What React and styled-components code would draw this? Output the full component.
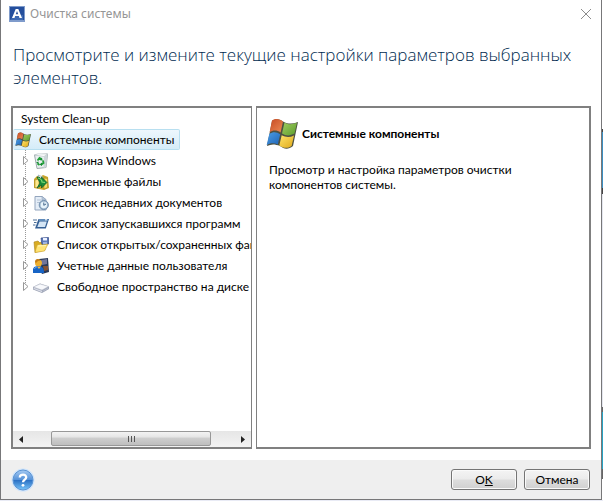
import React from 'react';
import styled, { createGlobalStyle } from 'styled-components';

const GlobalStyle = createGlobalStyle`
  * {
    box-sizing: border-box;
  }
  body {
    margin: 0;
    background: #e9ebf5;
    font-family: Lato, Roboto, sans-serif;
    font-size: 12px;
    color: #000;
  }
  button {
    font-family: inherit;
    font-size: inherit;
    color: inherit;
  }
  svg {
    flex-shrink: 0;
  }
`;

const Screen = styled.div`
  display: flex;
  height: 100vh;
  padding-bottom: 1px;
`;
const Dialog = styled.main`
  flex: 1;
  min-width: 0;
  display: flex;
  flex-direction: column;
  background: #fff;
  border: 1px solid #777779;
  border-top: 0;
`;
const Behind = styled.div`
  width: 1px;
  background: linear-gradient(
    #fff 129px, #444 129px, #444 132px, #3b8fc2 132px, #3b8fc2 188px,
    #444 188px, #444 194px, #e4e6ee 194px, #e4e6ee 407px, #666 407px,
    #666 412px, #27a3c4 412px, #27a3c4 469px, #666 469px, #666 479px, #fff 479px
  );
`;
const TitleBar = styled.header`
  display: flex;
  align-items: center;
  height: 27px;
  padding: 0 9px 0 8px;
  font-family: "Noto Sans", sans-serif;
  font-size: 12px;
  color: #969696;
`;
const Title = styled.span`
  flex: 1;
  margin-left: 5px;
`;
const PlainButton = styled.button`
  display: flex;
  align-items: center;
  justify-content: center;
  padding: 0;
  border: 0;
  background: none;
`;
const Heading = styled.h1`
  margin: 0;
  padding: 16px 12px 17px;
  font-family: "Open Sans", "Noto Sans", sans-serif;
  font-size: 17px;
  font-weight: 300;
  line-height: 23px;
  color: #002b50;
`;
const Panels = styled.div`
  flex: 1;
  min-height: 0;
  display: grid;
  grid-template-columns: 241px 1fr;
  gap: 4px;
  padding: 0 10px;
`;
const Panel = styled.section`
  display: flex;
  flex-direction: column;
  min-width: 0;
  border: 2px solid #808080;
  border-width: ${props => props.side === 'left' ? '2px 1px 2px 2px' : '2px 2px 2px 1px'};
`;
const TreeWrap = styled.div`
  flex: 1;
  overflow: hidden;
  white-space: nowrap;
`;
const TreeTitle = styled.div`
  padding-left: 8px;
  line-height: 21px;
`;
const Tree = styled.ul`
  margin: 0;
  padding: 0;
  list-style: none;
`;
const Selected = styled.div`
  display: inline-flex;
  align-items: center;
  gap: 8px;
  height: 21px;
  padding: 0 5px 0 1px;
  border: 1px solid #b8dff0;
  border-left-color: #dceffa;
  border-radius: 2px;
  background: linear-gradient(#edf7fd, #d5ecf8);
  vertical-align: top;
`;
const Branch = styled(Tree)`
  margin-left: 10px;
  background: repeating-linear-gradient(#999 0 1px, transparent 1px 2px) 2px 0 / 1px 136px no-repeat;
`;
const Row = styled.li`
  display: flex;
  align-items: center;
  height: 21px;
  gap: 8px;
`;
const Expander = styled(PlainButton)`
  flex-shrink: 0;
  width: 6px;
  height: 11px;
  margin-right: -4px;
`;
const ScrollBar = styled.div`
  display: flex;
  height: 16px;
  background: linear-gradient(#e6e6e6, #f3f3f3);
`;
const ScrollButton = styled(PlainButton)`
  width: 16px;
`;
const Track = styled.div`
  flex: 1;
  display: flex;
  padding: 0 24px 0 22px;
`;
const Thumb = styled.div`
  flex: 1;
  display: flex;
  align-items: center;
  justify-content: center;
  gap: 2px;
  height: 15px;
  border: 1px solid #989898;
  border-radius: 2px;
  background: linear-gradient(#f3f3f3 0, #e5e5e5 40%, #cfcfcf 45%, #bebebe 100%);
`;
const Grip = styled.span`
  width: 1px;
  height: 6px;
  background: #555;
`;
const Details = styled.div`
  padding: 10px 12px;
`;
const DetailsHead = styled.div`
  display: flex;
  align-items: center;
  gap: 4px;
  margin-left: -3px;
`;
const DetailsTitle = styled.h2`
  margin: 0;
  font-size: 12px;
  line-height: 16px;
`;
const DetailsText = styled.p`
  max-width: 270px;
  margin: 12px 0 0;
  line-height: 15px;
`;
const Footer = styled.footer`
  display: flex;
  align-items: center;
  gap: 7px;
  height: 39px;
  margin-top: 11px;
  padding: 0 11px 0 10px;
  background: #efefef;
`;
const HelpButton = styled(PlainButton)`
  margin-right: auto;
`;
const Button = styled.button`
  width: 66px;
  height: 21px;
  padding: 0;
  border: 1px solid #747474;
  border-radius: 3px;
  background: linear-gradient(#f4f4f4 0, #ebebeb 48%, #dddddd 52%, #d0d0d0 100%);
  box-shadow: inset 0 0 0 1px #fafafa;
  line-height: 17px;
`;

const AppIcon = () => (
  <svg width="16" height="16" viewBox="0 0 16 16" aria-hidden="true">
    <rect width="16" height="16" fill="#7f9bcb" />
    <rect x="1" y="1" width="14" height="13" fill="#254f9d" />
    <path d="M1 14L5 9L14 9V14Z" fill="#3d69b2" />
    <path d="M3 12L6.700 3H9.300L13 12H10.500L9.900 10H6.100L5.500 12ZM6.800 8.200H9.200L8 5Z" fill="#fff" fillRule="evenodd" />
  </svg>
);

const WindowsIcon = ({ size }) => (
  <svg width={size} height={size} viewBox="0 0 32 32" aria-hidden="true">
    <defs>
      <linearGradient id="wr" x2="1" y2="1"><stop stopColor="#c64b23" /><stop offset="1" stopColor="#ee8a54" /></linearGradient>
      <linearGradient id="wg" x2="1" y2="1"><stop stopColor="#a0cc61" /><stop offset="1" stopColor="#5c9d2b" /></linearGradient>
      <linearGradient id="wb" x2="1" y2="1"><stop stopColor="#4b9ce4" /><stop offset="1" stopColor="#1f65b7" /></linearGradient>
      <linearGradient id="wy" x2="1" y2="1"><stop stopColor="#ffe46a" /><stop offset="1" stopColor="#dfa91a" /></linearGradient>
    </defs>
    <path d="M6 3C10 0 14 1 18 4C22 6 27 6 32 4L27 28C22 32 18 31 14 28C9 26 5 26 1 28Z" fill="#4d5142" />
    <path d="M6 2.500C10 0 14 1 17 3.500L14.600 14.500C11 12 7 12 3.600 14.200Z" fill="url(#wr)" />
    <path d="M18.500 4.400C22 7 27 6.500 31 4.500L28.500 15.600C24 18 20 18 16 15.500Z" fill="url(#wg)" />
    <path d="M3.300 16C7 13.500 11 14 14.200 16.300L11.800 26.500C8 24.500 4 25 .7 27Z" fill="url(#wb)" />
    <path d="M15.700 17.300C20 19.500 24 19.500 28 17.400L25.600 28C21.500 31 17 30 13.300 27.500Z" fill="url(#wy)" />
  </svg>
);

const RecycleIcon = () => (
  <>
    <path d="M1.500 2L14.500 1L13 14.500L4 15.500Z" fill="#e9eff0" stroke="#9da9ac" />
    <path d="M1.500 2L5 .8L14.500 1L11 3.500Z" fill="#fff" stroke="#bcc6c8" strokeWidth=".7" />
    <path d="M11 3.500L10.500 15L13 14.500L14.500 1Z" fill="#ccd5d8" />
    <path d="M4.500 7.500L6.500 5L9 6.500M10 7.500L10.500 10L8 11.800M6.500 12L4.500 10.500" fill="none" stroke="#22a13a" strokeWidth="1.800" />
    <path d="M8 4.500L10 7.500L7 7.300ZM9 9.500V13L6.500 11.500ZM3 9.500L5.500 8.500V11Z" fill="#168b32" />
  </>
);

const TempIcon = () => (
  <>
    <path d="M1 5L4 2L7 3L10 1L15 3L16 14L11 16L1 14Z" fill="#c9a62b" />
    <path d="M2 6L6 5V14L2 13.500Z" fill="#ffe98d" stroke="#9f7f1e" strokeWidth=".5" />
    <path d="M11 4L14.500 4.500V13.500L11 15Z" fill="#f7db67" stroke="#9f7f1e" strokeWidth=".5" />
    <path d="M5 1L10 3L8 6Z" fill="#f7fbff" stroke="#64869d" strokeWidth=".5" />
    <path d="M4 3C7 3 8 4 8 6L8.500 3L14 8.500L8.500 14V11L4 14L7 9Z" fill="#188d3a" stroke="#075a25" strokeWidth=".7" />
    <path d="M5 4Q9 5 9 8L12 8.500" fill="none" stroke="#83dc73" strokeWidth="1.200" />
  </>
);

const RecentIcon = () => (
  <>
    <path d="M2 1.500H9L13 4.500V15H2Z" fill="#e4edf7" stroke="#93a5bd" />
    <path d="M9 1.500V5H13Z" fill="#bdcee0" stroke="#93a5bd" strokeWidth=".6" />
    <path d="M4 5H8M4 7.500H7" stroke="#b4c3d5" />
    <circle cx="10.800" cy="10" r="4.600" fill="#9eb6cd" stroke="#7391b0" />
    <circle cx="10.800" cy="10" r="3.200" fill="#e6f3fb" />
    <path d="M10.800 7.500V10.300L13 9" fill="none" stroke="#47698c" />
  </>
);

const ProgramsIcon = () => (
  <>
    <path d="M5.500 3H16L12.800 12.500H2Z" fill="#345f94" />
    <path d="M6.500 5.500H13.800L12 11H4.300Z" fill="#d4e5f5" />
    <path d="M6 4H15" stroke="#8cb9e0" />
    <path d="M0 4H4M1 6.500H3.500M0 9H2.500" stroke="#496c96" />
    <path d="M12 3.800H14" stroke="#fff" />
  </>
);

const OpenedIcon = () => (
  <>
    <path d="M1 5L5 4L6.500 5.500L12 5V13L2 15.500Z" fill="#d9ac20" stroke="#aa8119" strokeWidth=".6" />
    <path d="M8 1L15.500 .5V7L9 8Z" fill="#5877b8" stroke="#354b87" strokeWidth=".7" />
    <path d="M10 1H14V3.500H10Z" fill="#eef2ff" />
    <path d="M10 5L14 4.800V7L10 7.500Z" fill="#a0b4df" />
    <path d="M4 8L8 7L9 8L15 7L11.500 14L2 15.500Z" fill="#ffe475" stroke="#cba12a" strokeWidth=".6" />
    <path d="M5 9L13 8.500" stroke="#fff8bd" />
  </>
);

const UserIcon = () => (
  <>
    <path d="M6 1L15 0L16 14L9 16L6 10Z" fill="#293957" />
    <path d="M8 2L14 1V6L9 7Z" fill="#70759a" />
    <path d="M10 8H15V12L11 13Z" fill="#845233" />
    <circle cx="5.500" cy="5" r="3.500" fill="#efb02f" />
    <path d="M2 4C2 1 5 0 7.500 2.500L5 3L3 5Z" fill="#c47c17" />
    <path d="M0 15V11C1 8 4 8 6 8C9 8 11 10 11 15Z" fill="#1764c5" />
    <path d="M4 8.500L6 11L8 8.500" fill="#f1bd50" />
    <path d="M1.500 11C2 9.500 3 9 4 9" stroke="#69aaf1" fill="none" />
  </>
);

const DiskIcon = () => (
  <>
    <path d="M0 8L7 4.500L16 7.500V10L9 14L0 10.500Z" fill="#9aa1b3" />
    <path d="M.5 8L7 5L15.500 7.500L9 11Z" fill="#f8f9fc" stroke="#c2c6d1" strokeWidth=".5" />
    <path d="M.6 8.700L9 11.800V13.300L.6 10Z" fill="#d9dce7" />
    <path d="M9.500 11.800L15.400 8.600V9.800L9.500 13.100Z" fill="#b7bccd" />
  </>
);

const items = [
  { label: 'Корзина Windows', Icon: RecycleIcon },
  { label: 'Временные файлы', Icon: TempIcon },
  { label: 'Список недавних документов', Icon: RecentIcon },
  { label: 'Список запускавшихся программ', Icon: ProgramsIcon },
  { label: 'Список открытых/сохраненных файлов', Icon: OpenedIcon },
  { label: 'Учетные данные пользователя', Icon: UserIcon },
  { label: 'Свободное пространство на диске', Icon: DiskIcon },
];

const TreeItem = ({ label, Icon }) => {
  return (
    <Row>
      <Expander aria-label={label}>
        <svg width="6" height="11" viewBox="0 0 6 11">
          <path d="M.5 1.500L5 5.500L.5 9.500Z" fill="#fff" stroke="#999" />
        </svg>
      </Expander>
      <svg width="16" height="16" viewBox="0 0 16 16" aria-hidden="true">
        <Icon />
      </svg>
      <span>{label}</span>
    </Row>
  );
};

const HelpIcon = () => (
  <svg width="24" height="24" viewBox="0 0 24 24">
    <defs>
      <linearGradient id="help" x2="0" y2="1">
        <stop stopColor="#a7cbf2" />
        <stop offset=".5" stopColor="#5390d8" />
        <stop offset=".52" stopColor="#2c72c5" />
        <stop offset="1" stopColor="#78c5fa" />
      </linearGradient>
    </defs>
    <circle cx="12" cy="12" r="11.500" fill="#cfe4fb" />
    <circle cx="12" cy="12" r="10" fill="url(#help)" stroke="#5b93d3" />
    <path d="M8.800 9.500C8.800 5.500 15.500 5.700 15.200 9.500C15 11.500 12 11.800 12 14.300" fill="none" stroke="#fff" strokeWidth="2.300" />
    <circle cx="12" cy="17.300" r="1.400" fill="#fff" />
  </svg>
);

const App = () => {
  return (
    <>
      <GlobalStyle />
      <Screen>
        <Dialog>
          <TitleBar>
            <AppIcon />
            <Title>Очистка системы</Title>
            <PlainButton aria-label="Закрыть">
              <svg width="12" height="12" viewBox="0 0 12 12">
                <path d="M1 1L11 11M11 1L1 11" stroke="#8c8c8c" />
              </svg>
            </PlainButton>
          </TitleBar>
          <Heading>Просмотрите и измените текущие настройки параметров выбранных элементов.</Heading>
          <Panels>
            <Panel side="left">
              <TreeWrap>
                <TreeTitle>System Clean-up</TreeTitle>
                <Tree>
                  <li>
                    <Selected>
                      <WindowsIcon size={16} />
                      <span>Системные компоненты</span>
                    </Selected>
                    <Branch>
                      {items.map(item => <TreeItem key={item.label} {...item} />)}
                    </Branch>
                  </li>
                </Tree>
              </TreeWrap>
              <ScrollBar>
                <ScrollButton aria-label="Влево">
                  <svg width="4" height="7" viewBox="0 0 4 7"><path d="M4 0V7L0 3.500Z" fill="#222" /></svg>
                </ScrollButton>
                <Track>
                  <Thumb>
                    <Grip />
                    <Grip />
                    <Grip />
                  </Thumb>
                </Track>
                <ScrollButton aria-label="Вправо">
                  <svg width="4" height="7" viewBox="0 0 4 7"><path d="M0 0V7L4 3.500Z" fill="#222" /></svg>
                </ScrollButton>
              </ScrollBar>
            </Panel>
            <Panel side="right">
              <Details>
                <DetailsHead>
                  <WindowsIcon size={32} />
                  <DetailsTitle>Системные компоненты</DetailsTitle>
                </DetailsHead>
                <DetailsText>Просмотр и настройка параметров очистки компонентов системы.</DetailsText>
              </Details>
            </Panel>
          </Panels>
          <Footer>
            <HelpButton aria-label="Справка">
              <HelpIcon />
            </HelpButton>
            <Button>O<u>K</u></Button>
            <Button>Отмена</Button>
          </Footer>
        </Dialog>
        <Behind />
      </Screen>
    </>
  );
};

export default App;
